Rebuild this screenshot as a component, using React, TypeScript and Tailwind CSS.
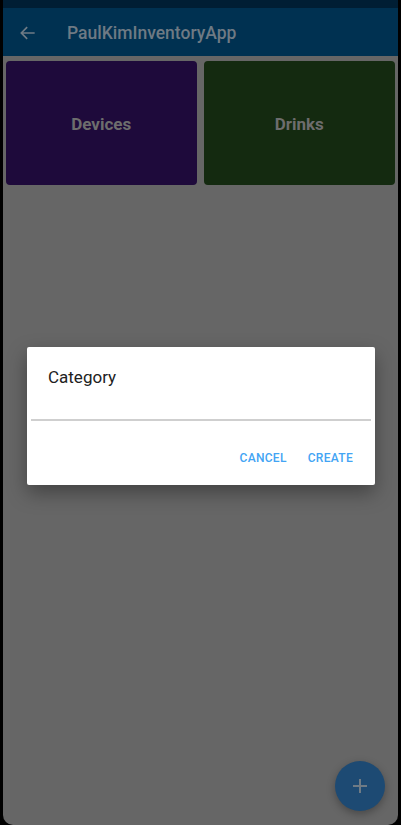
import React from "react";

export default function App() {
  return (
    <div className="w-[401px] h-[825px] bg-black px-[3px] flex" style={{ fontFamily: "Roboto, 'Noto Sans', sans-serif" }}>
      <div className="relative flex-1 flex flex-col bg-[#666666] rounded-b-[10px] overflow-hidden">
        <div className="h-[8px] bg-[#001e34]" />
        <div className="h-[48px] bg-[#003151] flex items-center">
          <svg className="ml-[15px] mt-[1px]" width="20" height="20" viewBox="0 0 24 24" fill="none" stroke="#6f7b85" strokeWidth="2">
            <path d="M20 12H4M11 5l-7 7 7 7" />
          </svg>
          <span className="ml-[29px] mt-[2px] text-[17.5px] font-medium text-[#6e7a84]">PaulKimInventoryApp</span>
        </div>
        <div className="flex gap-[7px] pt-[5px] px-[3px]">
          <div className="w-[191px] h-[124px] rounded-[4px] bg-[#1e0a3b] flex items-center justify-center pt-[4px]">
            <span className="text-[17px] font-bold text-[#6d6d6d]">Devices</span>
          </div>
          <div className="w-[192px] h-[124px] rounded-[4px] bg-[#142a10] flex items-center justify-center pt-[4px]">
            <span className="text-[17px] font-bold text-[#6d6d6d]">Drinks</span>
          </div>
        </div>
        <div className="absolute left-[24px] top-[347px] w-[348px] h-[138px] bg-white rounded-[2px] shadow-[0_8px_20px_rgba(0,0,0,0.35)] flex flex-col">
          <div className="pl-[21px] pt-[19px] text-[17px] text-[#212121] leading-[22px]">Category</div>
          <div className="mx-[4px] mt-[31px] h-[2px] bg-[#cfcfcf]" />
          <div className="flex justify-end items-center gap-[21px] pr-[22px] mt-[28px]">
            <span className="text-[12px] font-medium text-[#42a4f4] tracking-[0.3px]">CANCEL</span>
            <span className="text-[12px] font-medium text-[#42a4f4] tracking-[0.3px]">CREATE</span>
          </div>
        </div>
        <div className="absolute left-[332px] top-[761px] w-[50px] h-[50px] rounded-full bg-[#1d4a73] shadow-[0_3px_8px_rgba(0,0,0,0.3)] flex items-center justify-center">
          <svg width="16" height="16" viewBox="0 0 16 16" stroke="#6f7b85" strokeWidth="2">
            <path d="M8 1v14M1 8h14" />
          </svg>
        </div>
      </div>
    </div>
  );
}
